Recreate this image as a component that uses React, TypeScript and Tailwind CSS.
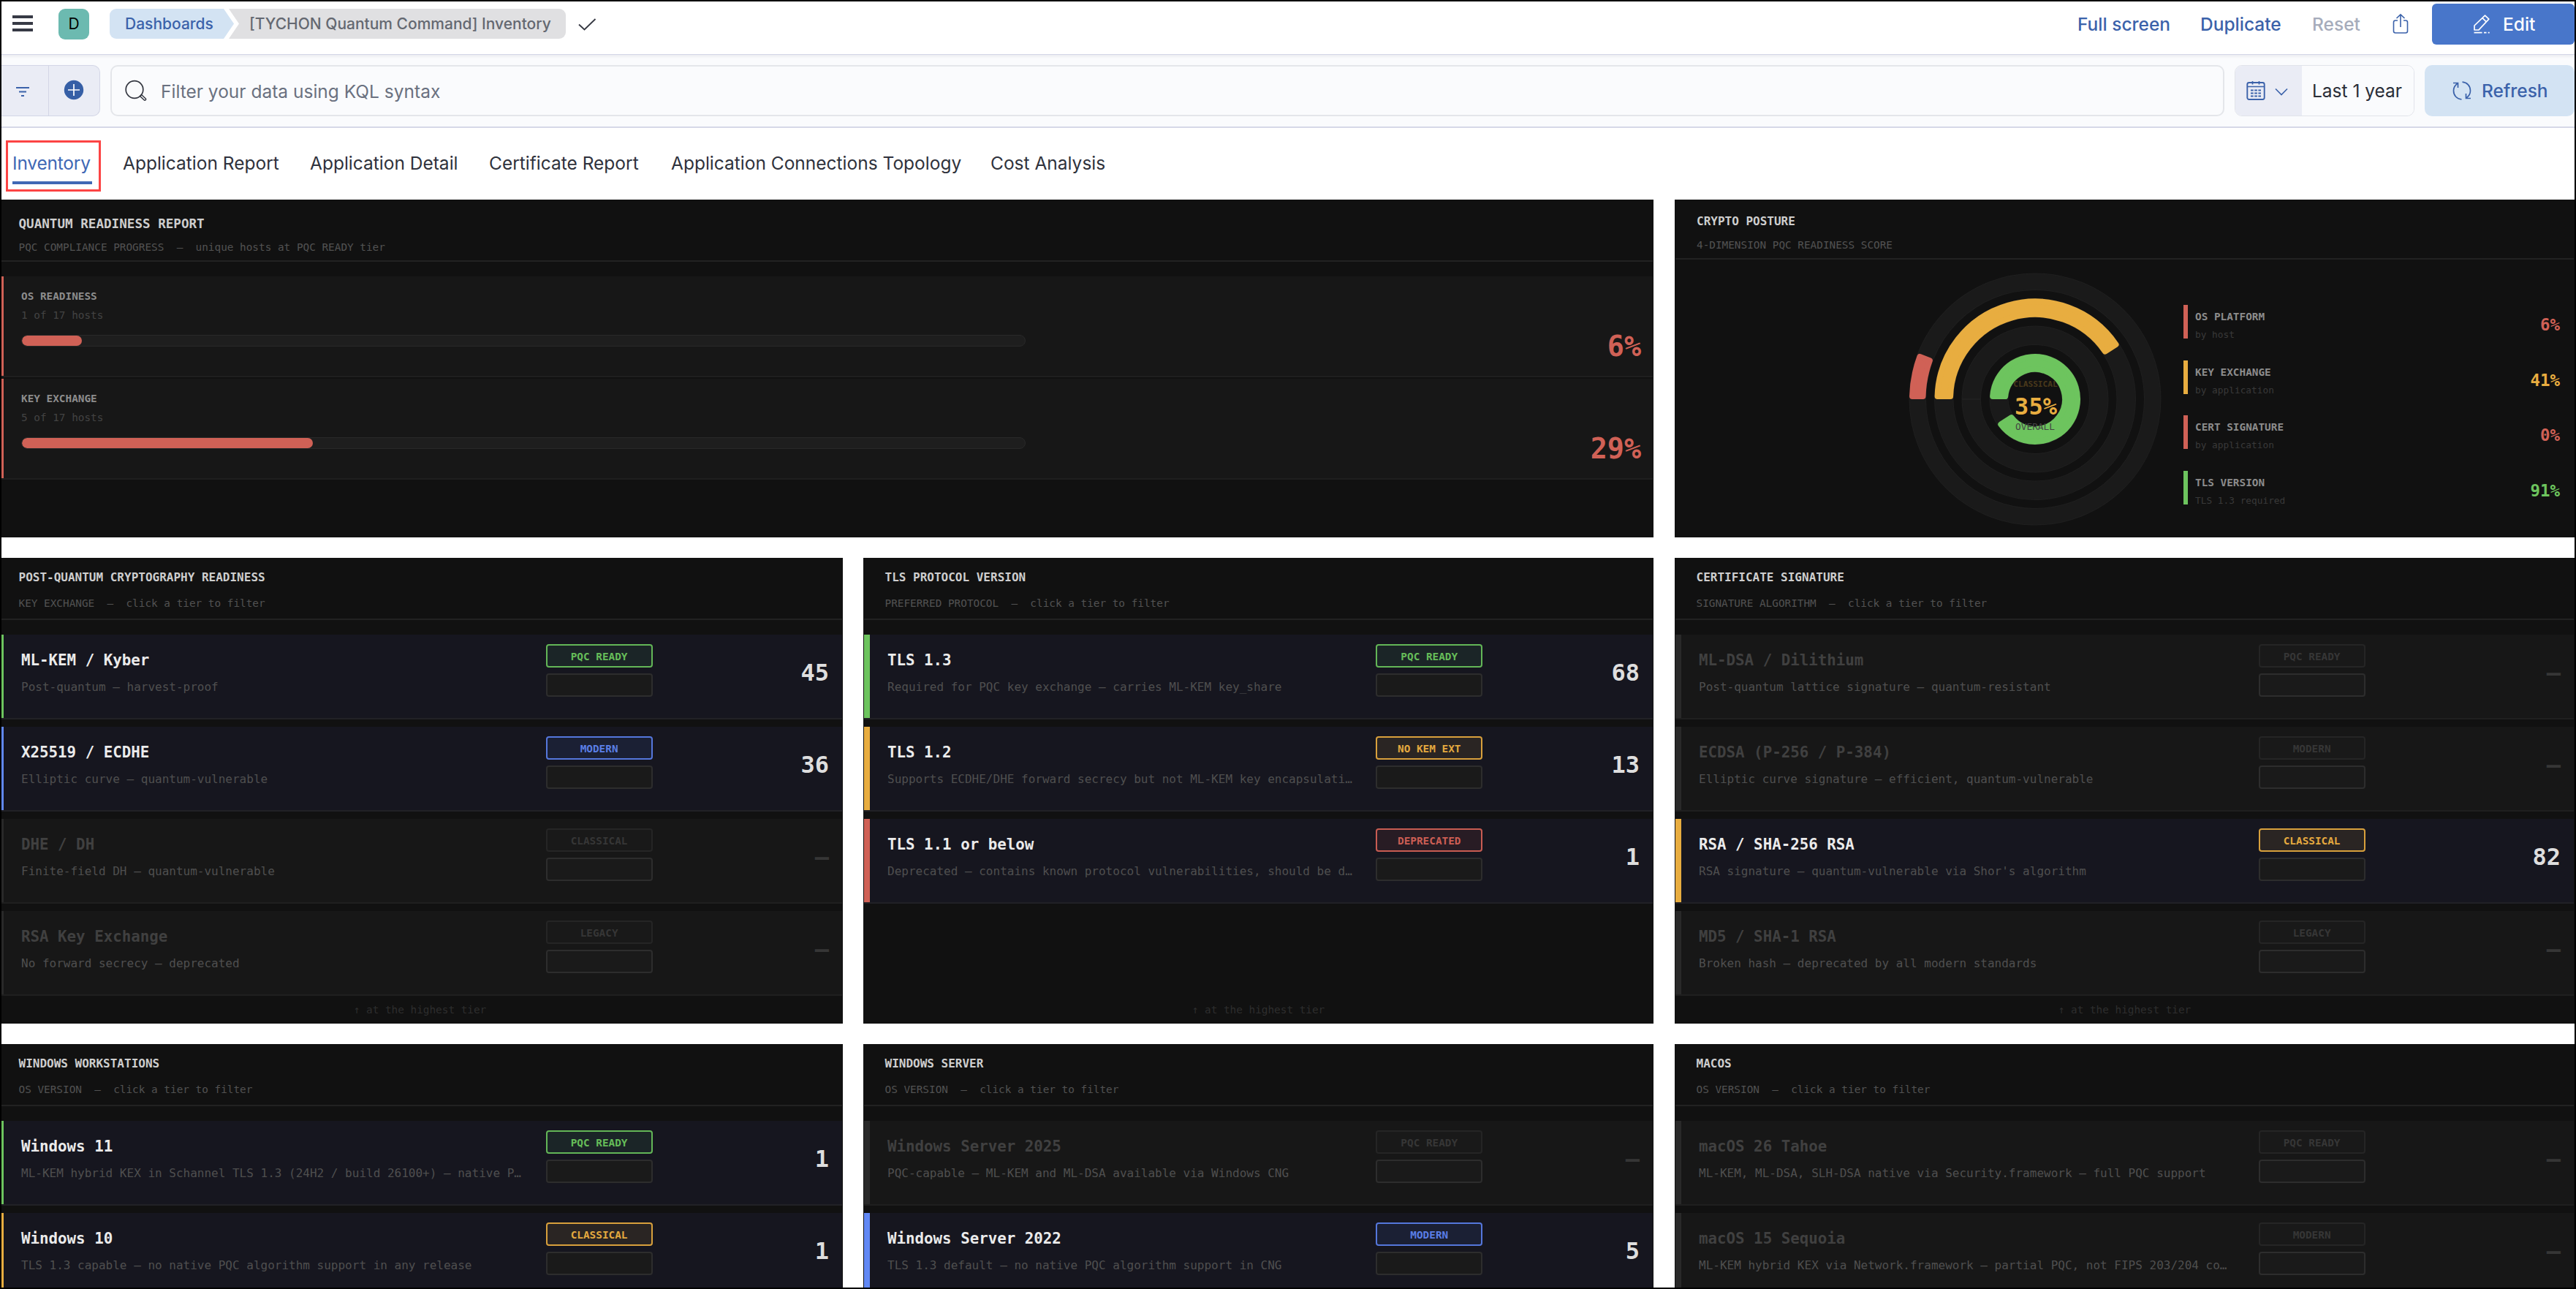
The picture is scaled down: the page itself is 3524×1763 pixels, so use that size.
import React from "react";

type Tone = "green" | "blue" | "amber" | "red" | "off";

type Tier = {
  name: string;
  desc: string;
  badge: string;
  count: string;
  tone: Tone;
};

type TierPanelData = {
  title: string;
  scope: string;
  tiers: Tier[];
};

const BAR: Record<Tone, string> = {
  green: "bg-[#6dc45e]",
  blue: "bg-[#6188f5]",
  amber: "bg-[#e8ad40]",
  red: "bg-[#d06156]",
  off: "bg-[#292929]",
};

const BADGE: Record<Tone, string> = {
  green: "border-[#63b657] bg-[#1b2527] text-[#66bd59]",
  blue: "border-[#5577dc] bg-[#1b2034] text-[#5a7ee6]",
  amber: "border-[#d8a03c] bg-[#2a2523] text-[#e4a93f]",
  red: "border-[#c85c52] bg-[#281c24] text-[#cc5e54]",
  off: "border-[#252525] bg-[#191919] text-[#363636]",
};

const MONO = "font-['DejaVu_Sans_Mono',monospace]";

const row2: TierPanelData[] = [
  {
    title: "POST-QUANTUM CRYPTOGRAPHY READINESS",
    scope: "KEY EXCHANGE",
    tiers: [
      { name: "ML-KEM / Kyber", desc: "Post-quantum — harvest-proof", badge: "PQC READY", count: "45", tone: "green" },
      { name: "X25519 / ECDHE", desc: "Elliptic curve — quantum-vulnerable", badge: "MODERN", count: "36", tone: "blue" },
      { name: "DHE / DH", desc: "Finite-field DH — quantum-vulnerable", badge: "CLASSICAL", count: "—", tone: "off" },
      { name: "RSA Key Exchange", desc: "No forward secrecy — deprecated", badge: "LEGACY", count: "—", tone: "off" },
    ],
  },
  {
    title: "TLS PROTOCOL VERSION",
    scope: "PREFERRED PROTOCOL",
    tiers: [
      { name: "TLS 1.3", desc: "Required for PQC key exchange — carries ML-KEM key_share", badge: "PQC READY", count: "68", tone: "green" },
      { name: "TLS 1.2", desc: "Supports ECDHE/DHE forward secrecy but not ML-KEM key encapsulati…", badge: "NO KEM EXT", count: "13", tone: "amber" },
      { name: "TLS 1.1 or below", desc: "Deprecated — contains known protocol vulnerabilities, should be d…", badge: "DEPRECATED", count: "1", tone: "red" },
    ],
  },
  {
    title: "CERTIFICATE SIGNATURE",
    scope: "SIGNATURE ALGORITHM",
    tiers: [
      { name: "ML-DSA / Dilithium", desc: "Post-quantum lattice signature — quantum-resistant", badge: "PQC READY", count: "—", tone: "off" },
      { name: "ECDSA (P-256 / P-384)", desc: "Elliptic curve signature — efficient, quantum-vulnerable", badge: "MODERN", count: "—", tone: "off" },
      { name: "RSA / SHA-256 RSA", desc: "RSA signature — quantum-vulnerable via Shor's algorithm", badge: "CLASSICAL", count: "82", tone: "amber" },
      { name: "MD5 / SHA-1 RSA", desc: "Broken hash — deprecated by all modern standards", badge: "LEGACY", count: "—", tone: "off" },
    ],
  },
];

const row3: TierPanelData[] = [
  {
    title: "WINDOWS WORKSTATIONS",
    scope: "OS VERSION",
    tiers: [
      { name: "Windows 11", desc: "ML-KEM hybrid KEX in Schannel TLS 1.3 (24H2 / build 26100+) — native P…", badge: "PQC READY", count: "1", tone: "green" },
      { name: "Windows 10", desc: "TLS 1.3 capable — no native PQC algorithm support in any release", badge: "CLASSICAL", count: "1", tone: "amber" },
    ],
  },
  {
    title: "WINDOWS SERVER",
    scope: "OS VERSION",
    tiers: [
      { name: "Windows Server 2025", desc: "PQC-capable — ML-KEM and ML-DSA available via Windows CNG", badge: "PQC READY", count: "—", tone: "off" },
      { name: "Windows Server 2022", desc: "TLS 1.3 default — no native PQC algorithm support in CNG", badge: "MODERN", count: "5", tone: "blue" },
    ],
  },
  {
    title: "MACOS",
    scope: "OS VERSION",
    tiers: [
      { name: "macOS 26 Tahoe", desc: "ML-KEM, ML-DSA, SLH-DSA native via Security.framework — full PQC support", badge: "PQC READY", count: "—", tone: "off" },
      { name: "macOS 15 Sequoia", desc: "ML-KEM hybrid KEX via Network.framework — partial PQC, not FIPS 203/204 co…", badge: "MODERN", count: "—", tone: "off" },
    ],
  },
];

const COLUMN_WIDTH = ["w-[1157px]", "w-[1081px] ml-[28px]", "w-[1231px] ml-[29px]"];

function TierRow({ tier }: { tier: Tier }) {
  const off = tier.tone === "off";
  return (
    <div
      className={`flex h-[116px] shrink-0 border-b-2 ${
        off ? "border-[#1f1f1f] bg-[#171717]" : "border-[#212126] bg-[#16161f]"
      }`}
    >
      <div className="flex w-[64.9%] shrink-0">
        <div className={`w-[8px] shrink-0 ${BAR[tier.tone]}`} />
        <div className="min-w-0 pl-[24px] pt-[23px]">
          <div
            className={`whitespace-nowrap text-[20.8px] font-bold leading-[24px] ${
              off ? "text-[#404040]" : "text-[#ebebeb]"
            }`}
          >
            {tier.name}
          </div>
          <div className="mt-[15px] whitespace-nowrap text-[16px] leading-[20px] text-[#4f4f4f]">{tier.desc}</div>
        </div>
      </div>
      <div className="flex w-[146px] shrink-0 flex-col gap-2 pt-[13px]">
        <div
          className={`h-[32px] rounded-[4px] border-2 text-center text-[14.37px] font-bold leading-[30px] ${BADGE[tier.tone]}`}
        >
          {tier.badge}
        </div>
        <div className="h-[32px] rounded-[4px] border-2 border-[#2d2d2d] bg-[#1a1a1a]" />
      </div>
      <div
        className={`flex-1 pr-[18px] pt-[36px] text-right text-[32px] font-bold leading-[32px] ${
          off ? "text-[#363636]" : "text-[#dedede]"
        }`}
      >
        {tier.count}
      </div>
    </div>
  );
}

function PanelHead({ title, sub, big }: { title: string; sub: string; big?: boolean }) {
  return (
    <div
      className={`h-[85px] shrink-0 border-b-2 border-[#222222] pl-[28.500px] ${big ? "pt-[23px]" : "pt-[17px]"}`}
    >
      <div
        className={`whitespace-nowrap font-bold leading-[20px] text-[#cecece] ${big ? "text-[17.6px]" : "text-[16px]"}`}
      >
        {title}
      </div>
      <div
        className={`whitespace-pre text-[14.37px] leading-[20px] text-[#525252] ${big ? "mt-[12px]" : "mt-[15px]"}`}
      >
        {sub}
      </div>
    </div>
  );
}

function TierPanel({ data, width, full }: { data: TierPanelData; width: string; full: boolean }) {
  return (
    <section className={`flex shrink-0 flex-col bg-[#111111] px-px ${full ? "h-[637px]" : "h-[660px]"} ${width}`}>
      <PanelHead title={data.title} sub={`${data.scope}\u00a0\u00a0—\u00a0\u00a0click a tier to filter`} />
      <div className="mt-[20px] flex flex-col gap-[10px]">
        {data.tiers.map((t) => (
          <TierRow key={t.name} tier={t} />
        ))}
      </div>
      {full && (
        <div className="mt-auto mb-[9px] text-center text-[14.37px] leading-[20px] text-[#2e2e2e]">
          ↑ at the highest tier
        </div>
      )}
    </section>
  );
}

function ProgressRow({ label, sub, pct }: { label: string; sub: string; pct: number }) {
  return (
    <div className="flex h-[138px] border-b-2 border-[#1f1f1f] bg-[#171717]">
      <div className="w-[8px] shrink-0 bg-[#d06156]" />
      <div className="w-[1400px] shrink-0 pl-[24px] pt-[17px]">
        <div className="text-[14.37px] font-bold leading-[20px] text-[#8c8c8c]">{label}</div>
        <div className="mt-[6px] text-[14.37px] leading-[20px] text-[#434343]">{sub}</div>
        <div className="mt-[17px] h-[16px] w-[1374px] overflow-hidden rounded-full border border-[#292929] bg-[#1e1e1e]">
          <div className="h-full rounded-full bg-[#d06156]" style={{ width: `${pct}%` }} />
        </div>
      </div>
      <div className="flex-1 pr-[16px] pt-[76px] text-right text-[38.4px] font-bold leading-[40px] text-[#d06156]">
        {pct}%
      </div>
    </div>
  );
}

/** Ring segment from the nine o'clock position, clockwise, with softly rounded corners. */
function segment(outer: number, inner: number, pct: number, corner: number) {
  const a = (pct / 100) * Math.PI * 2;
  const ro = outer - corner;
  const ri = inner + corner;
  const point = (r: number, angle: number) => {
    const t = Math.PI + angle;
    return `${(r * Math.cos(t)).toFixed(2)} ${(r * Math.sin(t)).toFixed(2)}`;
  };
  const dO = Math.asin(corner / ro);
  const dI = Math.asin(corner / ri);
  const large = a > Math.PI ? 1 : 0;
  return `M${point(ro, dO)} A${ro} ${ro} 0 ${large} 1 ${point(ro, a - dO)} L${point(ri, a - dI)} A${ri} ${ri} 0 ${large} 0 ${point(ri, dI)} Z`;
}

const rings = [
  { outer: 172, inner: 149.5, pct: 6, color: "#d06156" },
  { outer: 137.5, inner: 112, pct: 41, color: "#e8ad40" },
  { outer: 100, inner: 74.5, pct: 0, color: "#d06156" },
  { outer: 62, inner: 37, pct: 91, color: "#6dc45e" },
];

function Gauge() {
  return (
    <svg width="348" height="348" viewBox="-174 -174 348 348" className={MONO}>
      {rings.map((r) => (
        <g key={r.outer}>
          <circle r={(r.outer + r.inner) / 2} fill="none" stroke="#1f1f1f" strokeWidth={r.outer - r.inner + 1} />
          <circle r={(r.outer + r.inner) / 2} fill="none" stroke="#1a1a1a" strokeWidth={r.outer - r.inner - 1} />
          {r.pct > 0 ? (
            <path
              d={segment(r.outer, r.inner, r.pct, 4)}
              fill={r.color}
              stroke={r.color}
              strokeWidth="8"
              strokeLinejoin="round"
            />
          ) : (
            <path d={`M${-r.outer} 0H${-r.inner}`} stroke="#1f1f1f" strokeWidth="2" />
          )}
        </g>
      ))}
      <text x="0.5" y="-17" textAnchor="middle" fontSize="11.2" fontWeight="bold" fill="#4a391b">
        CLASSICAL
      </text>
      <text x="1" y="21" textAnchor="middle" fontSize="32" fontWeight="bold" fill="#e8ad40">
        35%
      </text>
      <text x="0" y="41.5" textAnchor="middle" fontSize="12.8" fill="#444444">
        OVERALL
      </text>
    </svg>
  );
}

const dimensions = [
  { label: "OS PLATFORM", sub: "by host", pct: "6%", bar: "bg-[#d06156]", text: "text-[#d06156]" },
  { label: "KEY EXCHANGE", sub: "by application", pct: "41%", bar: "bg-[#e8ad40]", text: "text-[#e8ad40]" },
  { label: "CERT SIGNATURE", sub: "by application", pct: "0%", bar: "bg-[#d06156]", text: "text-[#d06156]" },
  { label: "TLS VERSION", sub: "TLS 1.3 required", pct: "91%", bar: "bg-[#6dc45e]", text: "text-[#6dc45e]" },
];

function PosturePanel() {
  return (
    <section className="ml-[29px] flex h-[462px] w-[1231px] shrink-0 flex-col bg-[#111111] px-px">
      <div className="h-[82px] shrink-0 border-b-2 border-[#222222] pl-[29px] pt-[20px]">
        <div className="text-[16px] font-bold leading-[20px] text-[#cecece]">CRYPTO POSTURE</div>
        <div className="mt-[12px] text-[14.37px] leading-[20px] text-[#525252]">4-DIMENSION PQC READINESS SCORE</div>
      </div>
      <div className="flex flex-1">
        <div className="ml-[318px] mt-[17px] h-[348px] w-[348px] shrink-0">
          <Gauge />
        </div>
        <div className="ml-[29px] mt-[62px] flex flex-1 flex-col gap-[29.6px]">
          {dimensions.map((d) => (
            <div key={d.label} className="flex h-[46px] shrink-0">
              <div className={`w-[6px] shrink-0 ${d.bar}`} />
              <div className="pl-[10px] pt-[6px]">
                <div className="text-[14.37px] font-bold leading-[20px] text-[#8c8c8c]">{d.label}</div>
                <div className="mt-[5px] text-[12.8px] leading-[20px] text-[#393939]">{d.sub}</div>
              </div>
              <div
                className={`ml-auto pr-[19px] pt-[15px] text-right text-[22.4px] font-bold leading-[24px] ${d.text}`}
              >
                {d.pct}
              </div>
            </div>
          ))}
        </div>
      </div>
    </section>
  );
}

function TopBar() {
  return (
    <header className="flex h-[73px] shrink-0 items-start border-b border-[#d3d6e6] bg-white pt-[3px]">
      <div className="ml-[15px] mt-[16px] flex w-[28px] flex-col gap-[5px]">
        <div className="h-[4px] bg-[#373a45]" />
        <div className="h-[4px] bg-[#373a45]" />
        <div className="h-[4px] bg-[#373a45]" />
      </div>
      <div className="ml-[35px] mt-[7px] flex size-[42px] items-center justify-center rounded-[9px] bg-[#6cbab0] text-[21px] text-black">
        D
      </div>
      <div className="ml-[28px] mt-[7px] flex text-[21px] font-medium leading-[41px]">
        <div className="h-[41px] w-[170px] whitespace-nowrap rounded-l-[9px] bg-[#d3e3f3] pl-[21px] text-[#3b62aa] [clip-path:polygon(0_0,156px_0,100%_50%,156px_100%,0_100%)]">
          Dashboards
        </div>
        <div className="-ml-[7px] h-[41px] w-[461px] whitespace-nowrap rounded-r-[9px] bg-[#e0e0e2] pl-[28px] text-[#646871] [clip-path:polygon(0_0,100%_0,100%_100%,0_100%,14px_50%)]">
          [TYCHON Quantum Command] Inventory
        </div>
      </div>
      <svg width="28" height="20" viewBox="0 0 28 20" className="ml-[15px] mt-[18px]">
        <path d="M3 10.5l7.5 7L25.500 3" fill="none" stroke="#343741" strokeWidth="1.8" />
      </svg>
      <div className="ml-auto flex items-start text-[24.5px] font-medium leading-[56px] text-[#3b62aa]">
        <div className="w-[168px] whitespace-nowrap">Full screen</div>
        <div className="w-[153px] whitespace-nowrap">Duplicate</div>
        <div className="w-[110px] whitespace-nowrap text-[#a6acbb]">Reset</div>
        <svg width="22" height="28" viewBox="0 0 22 28" className="mr-[32px] mt-[13px]" fill="none" stroke="#3b62aa" strokeWidth="1.6">
          <path d="M7 10H4a2.500 2.500 0 0 0-2.500 2.500v12A2.500 2.500 0 0 0 4 27h14a2.500 2.500 0 0 0 2.500-2.500v-12A2.500 2.500 0 0 0 18 10h-3" />
          <path d="M11 19V2M5.500 7L11 1.800 16.500 7" />
        </svg>
        <div className="flex h-[56px] w-[195px] rounded-[6px] bg-[#4876ca] text-white">
          <svg width="24" height="28" viewBox="0 0 24 28" className="ml-[56px] mt-[14px]" fill="none" stroke="white" strokeWidth="1.700">
            <path d="M2 22v-6L16.500 2.200l5.300 5L8 21.800zM13 5.600l5.300 5.200" strokeLinejoin="round" />
            <path d="M1.500 25.600h11M15 25.600h3.500M20.700 25.600h2" />
          </svg>
          <span className="ml-[17px]">Edit</span>
        </div>
      </div>
    </header>
  );
}

function QueryBar() {
  return (
    <div className="flex h-[100px] shrink-0 border-b-2 border-[#d6d8e8] bg-[#fafbfd] pt-[14px] text-[24.5px] shadow-[inset_0_5px_4px_-3px_#e9eaef]">
      <div className="flex h-[70px] w-[135px] rounded-r-[10px] border border-l-0 border-[#d3d6e6] bg-[#eaecf5]">
        <div className="flex w-[65px] border-r border-[#d3d6e6] pl-[20px] pt-[28px]">
          <svg width="18" height="14" viewBox="0 0 18 14" stroke="#3b62aa" strokeWidth="2">
            <path d="M0 2h18M4 7.500h10M7 13h4" />
          </svg>
        </div>
        <svg width="28" height="28" viewBox="0 0 28 28" className="ml-[20px] mt-[19px]">
          <circle cx="14" cy="14" r="13.200" fill="#365fa6" />
          <path d="M14 6v16M6 14h16" stroke="white" strokeWidth="1.700" />
        </svg>
      </div>
      <div className="ml-[14px] flex h-[70px] w-[1px] flex-1 rounded-[10px] border-2 border-[#e4e6ea] bg-[#fafbfd]">
        <svg width="30" height="30" viewBox="0 0 30 30" className="ml-[18px] mt-[18px]" fill="none" stroke="#343741">
          <circle cx="13" cy="13.500" r="11.800" strokeWidth="1.700" />
          <path d="M20.500 22.500l2-2 5.600 5.300a1.300 1.300 0 0 1-2 2z" strokeWidth="1.500" />
        </svg>
        <div className="ml-[19px] whitespace-nowrap leading-[69px] text-[#6a7180]">Filter your data using KQL syntax</div>
      </div>
      <div className="ml-[14px] flex h-[70px] w-[246px] overflow-hidden rounded-[10px] border border-[#e1e3ea]">
        <div className="flex w-[91px] bg-[#eaecf5]">
          <svg width="26" height="28" viewBox="0 0 26 28" className="ml-[15px] mt-[20px]" fill="none" stroke="#3b62aa">
            <rect x="1.300" y="3" width="23.400" height="23" rx="2.500" strokeWidth="1.900" />
            <path d="M2 8.500h22M8.500 1v4.500M17.500 1v4.500" strokeWidth="1.700" />
            <path d="M6 13.500h14M6 17.500h14M6 21.500h14" strokeWidth="2" strokeDasharray="3.700 1.500" />
          </svg>
          <svg width="18" height="12" viewBox="0 0 18 12" className="ml-[13px] mt-[30px]" fill="none" stroke="#3b62aa" strokeWidth="1.600">
            <path d="M1 1.500l8 8 8-8" />
          </svg>
        </div>
        <div className="flex-1 whitespace-nowrap bg-[#fafbfd] pl-[14px] leading-[68px] text-[#2b2e38]">Last 1 year</div>
      </div>
      <div className="ml-[14px] flex h-[70px] w-[205px] rounded-[10px] bg-[#d3e3f3] font-medium leading-[70px] text-[#3b62aa]">
        <svg width="26" height="26" viewBox="0 0 26 26" className="ml-[38px] mt-[22px]" fill="none" stroke="#3b62aa" strokeWidth="1.700">
          <path d="M12.500 25C6 24.500 1.500 19.500 1.500 13c0-4 2-7.500 5.500-10M1 2.500h6.500V9" />
          <path d="M13.500 1.200C20 1.700 24.500 6.500 24.500 13c0 4-2 7.500-5.500 10M25 23.500h-6.500V17" />
        </svg>
        <span className="ml-[14px]">Refresh</span>
      </div>
    </div>
  );
}

function Tabs() {
  return (
    <nav className="flex h-[98px] shrink-0 bg-white text-[24.5px] leading-[56px] text-[#2f323c]">
      <div className="ml-[6px] mt-[17px] h-[70px] w-[130px] border-[3px] border-[#fc4444] pl-[6px] pr-[9px] pt-px text-[#4068b5]">
        <div className="h-[56px] whitespace-nowrap border-b-4 border-[#4068b5]">
          <span className="block h-[52px] leading-[54px] tracking-[-0.2px]">Inventory</span>
        </div>
      </div>
      <div className="ml-[30px] flex gap-[42px] whitespace-nowrap pt-[20px]">
        <div className="w-[214px]">Application Report</div>
        <div className="w-[203px]">Application Detail</div>
        <div className="w-[207px]">Certificate Report</div>
        <div className="w-[395px]">Application Connections Topology</div>
        <div>Cost Analysis</div>
      </div>
    </nav>
  );
}

export default function App() {
  return (
    <div className="flex h-[1763px] w-[3524px] flex-col overflow-hidden border-2 border-black bg-white font-['Inter',sans-serif]">
      <TopBar />
      <QueryBar />
      <Tabs />
      <main className={`-ml-[6px] flex flex-col gap-[28px] ${MONO}`}>
        <div className="flex">
          <section className="h-[462px] w-[2266px] shrink-0 bg-[#111111] px-px">
            <PanelHead big title="QUANTUM READINESS REPORT" sub={"PQC COMPLIANCE PROGRESS\u00a0\u00a0—\u00a0\u00a0unique hosts at PQC READY tier"} />
            <div className="mt-[20px] flex flex-col gap-[2px]">
              <ProgressRow label="OS READINESS" sub="1 of 17 hosts" pct={6} />
              <ProgressRow label="KEY EXCHANGE" sub="5 of 17 hosts" pct={29} />
            </div>
          </section>
          <PosturePanel />
        </div>
        <div className="flex">
          {row2.map((p, i) => (
            <TierPanel key={p.title} data={p} width={COLUMN_WIDTH[i]} full />
          ))}
        </div>
        <div className="flex">
          {row3.map((p, i) => (
            <TierPanel key={p.title} data={p} width={COLUMN_WIDTH[i]} full={false} />
          ))}
        </div>
      </main>
    </div>
  );
}
